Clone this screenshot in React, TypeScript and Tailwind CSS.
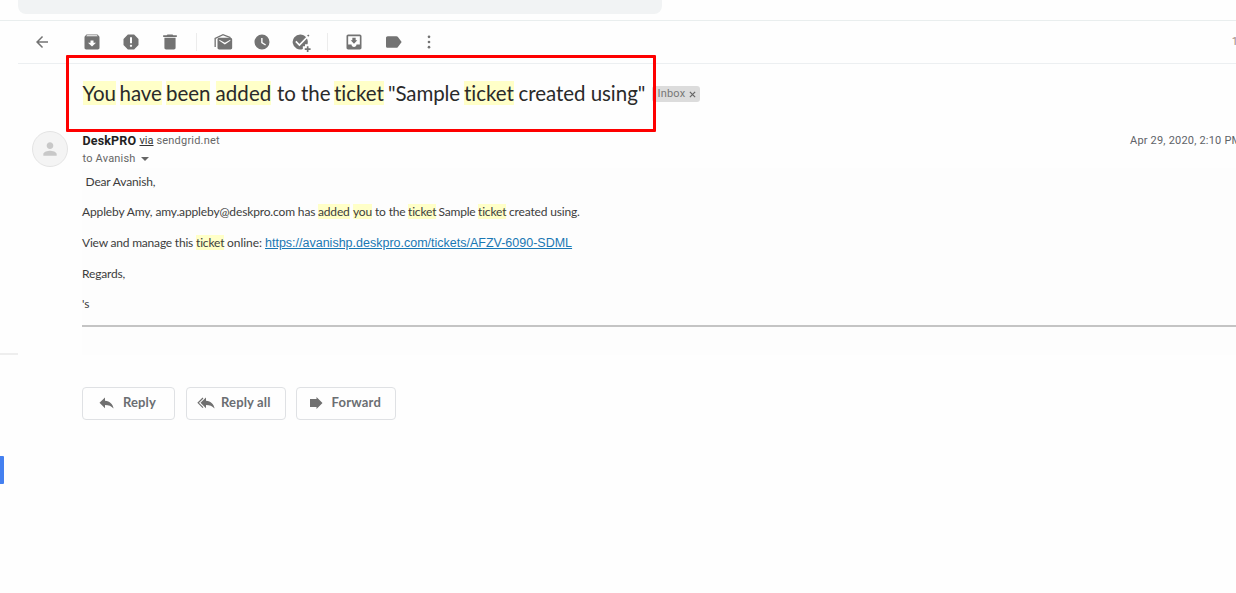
import React from "react";

function Icon({ d, className = "size-5", children }: { d?: string; className?: string; children?: React.ReactNode }) {
  return (
    <svg viewBox="0 0 24 24" fill="currentColor" className={"shrink-0 " + className}>
      {d && <path fillRule="evenodd" d={d} />}
      {children}
    </svg>
  );
}

const BACK = "M20 11H7.83l5.59-5.59L12 4l-8 8 8 8 1.41-1.41L7.83 13H20v-2z";
const ARCHIVE =
  "M20.54 5.23l-1.39-1.68C18.88 3.21 18.47 3 18 3H6c-.47 0-.88.21-1.16.55L3.46 5.23C3.17 5.57 3 6.02 3 6.5V19c0 1.1.9 2 2 2h14c1.1 0 2-.9 2-2V6.5c0-.48-.17-.93-.46-1.27zM12 17.4l-4.8-4.6H10.2v-2.6h3.6v2.6h3L12 17.4zM5.12 5l.81-1h12l.94 1H5.12z";
const REPORT =
  "M15.73 3H8.27L3 8.27v7.46L8.27 21h7.46L21 15.73V8.27L15.73 3zM12 18c-.8 0-1.4-.6-1.4-1.4s.6-1.4 1.4-1.4 1.4.6 1.4 1.4S12.8 18 12 18zm1.2-4.4h-2.4V6.4h2.4z";
const TRASH = "M5.3 19c0 1.1.9 2 2 2h9.4c1.1 0 2-.9 2-2V7H5.3v12zM19.5 4H16l-1-1H9L8 4H3.8v2h16.4V4z";
const UNREAD =
  "M23 9v10c0 1.1-.9 2-2 2H7.4c-1.1 0-2-.9-2-2V9c0-1.1.9-2 2-2H21c1.1 0 2 .9 2 2zM20.8 10.6V9.2L14.2 13 7.6 9.2v1.4l6.6 4.4z";
const CLOCK = "M12 3a9 9 0 1 0 0 18 9 9 0 0 0 0-18zm3.9 13.2L11 13.2V7.2h1.7v5.2l4.1 2.5z";
const MOVE =
  "M19 3H5c-1.1 0-2 .9-2 2v14c0 1.1.9 2 2 2h14c1.1 0 2-.9 2-2V5c0-1.1-.9-2-2-2zm0 12h-4c0 1.66-1.35 3-3 3s-3-1.34-3-3H5V5h14v10zM16 10h-2V7h-4v3H8l4 4z";
const LABEL = "M16.5 5.84C16.13 5.33 15.55 5 14.9 5L4.4 5.01c-1.1 0-2 .89-2 1.99v10c0 1.1.9 1.99 2 1.99L14.9 19c.65 0 1.23-.33 1.6-.84L21.2 12z";
const PERSON = "M12 12c2.21 0 4-1.79 4-4s-1.79-4-4-4-4 1.79-4 4 1.79 4 4 4zm0 2c-2.67 0-8 1.34-8 4v2h16v-2c0-2.66-5.33-4-8-4z";

function Hl({ children }: { children: React.ReactNode }) {
  return <mark className="bg-[#ffffc8] text-inherit">{children}</mark>;
}

function Separator({ className }: { className: string }) {
  return <div className={"h-[18px] w-px bg-[#ececec] " + className} />;
}

function Toolbar() {
  return (
    <div className="ml-[18px] flex h-[43px] items-center border-b border-[#eceff1] text-[#737373]">
      <Icon d={BACK} className="ml-[14.5px] size-[18px]" />
      <Icon d={ARCHIVE} className="ml-[31px] size-5" />
      <Icon d={REPORT} className="ml-[19px] size-5" />
      <Icon d={TRASH} className="ml-[19px] size-5" />
      <Separator className="ml-[16.5px]" />
      <Icon d={UNREAD} className="ml-4 size-5">
        <path d="M2.6 18V7.600L12 3.200l9 3.600" fill="none" stroke="currentColor" strokeWidth="1.600" />
      </Icon>
      <Icon d={CLOCK} className="ml-[19px] size-5" />
      <Icon className="ml-[19px] size-5">
        <path d="M11 3a9 9 0 1 0 3.200 17.400V17h2.600v-2.400h3A9 9 0 0 0 11 3z" />
        <path d="M5.800 11.300l4.300 4.300L21 4.500" fill="none" stroke="white" strokeWidth="2" />
        <path d="M20 3.600L21.400 5" fill="none" stroke="currentColor" strokeWidth="2" />
        <path d="M20 17v7M16.500 20.500h7" stroke="currentColor" strokeWidth="2" />
      </Icon>
      <Separator className="ml-[16px]" />
      <Icon d={MOVE} className="ml-4 size-5" />
      <Icon d={LABEL} className="ml-5 size-5" />
      <Icon className="ml-[15px] size-5">
        <circle cx="12" cy="5.800" r="1.600" />
        <circle cx="12" cy="12" r="1.600" />
        <circle cx="12" cy="18.200" r="1.600" />
      </Icon>
      <span className="mr-[-2px] ml-auto font-['Roboto'] text-[11px] text-[#a08880]">1</span>
    </div>
  );
}

function Subject() {
  return (
    <div className="ml-[66px] flex h-[77px] items-center">
      <div className="z-10 flex h-[77px] w-[590px] shrink-0 items-center rounded-[1px] border-3 border-[#fe0000] pb-[2px] pl-[13.5px]">
        <h1 className="flex font-['Lato'] text-[20.5px] leading-[24px] tracking-[-0.05px] whitespace-pre text-[#2a2a2a]">
          <span className="w-[37px]"><Hl>You</Hl></span>
          <span className="w-[46.5px]"><Hl>have</Hl></span>
          <span className="w-[49.5px]"><Hl>been</Hl></span>
          <span className="w-[61.5px] tracking-[0.1px]"><Hl>added</Hl></span>
          <span className="w-[57px]">to the</span>
          <span className="w-[54px]"><Hl>ticket</Hl></span>
          <span className="w-[76px] tracking-[-0.12px]">"Sample</span>
          <span className="w-[54.500px]"><Hl>ticket</Hl></span>
          <span>created using"</span>
        </h1>
      </div>
      <div className="-ml-1 flex h-4 w-[48px] items-center rounded-[3px] bg-[#dcdcdc] pt-px pl-[5.5px] font-['Roboto'] text-[11px] leading-[14px] tracking-[0.2px] text-[#777]">
        Inbox
        <svg viewBox="0 0 8 8" className="ml-1 size-[7px] text-[#666]">
          <path d="M1 1l6 6M7 1L1 7" stroke="currentColor" strokeWidth="1.4" />
        </svg>
      </div>
    </div>
  );
}

function ActionButton({ className, children }: { className: string; children: React.ReactNode }) {
  return (
    <button
      className={
        "flex h-[33px] items-center rounded-[4px] border border-[#dfe1e4] pb-px font-['Lato'] text-[13px] font-bold text-[#6b6e72] " +
        className
      }
    >
      {children}
    </button>
  );
}

export default function App() {
  return (
    <div className="flex h-[593px] w-[1236px] overflow-hidden bg-[#fefefe]">
      <div className="absolute top-[353px] left-0 h-[2px] w-[18px] bg-[#eeeeee]" />
      <div className="absolute top-[456px] left-0 h-7 w-1 rounded-r-[1px] bg-[#4480f0]" />
      <main className="flex w-full flex-col">
        <div className="ml-[18px] h-[14px] w-[644px] shrink-0 rounded-b-lg bg-[#f1f3f4]" />
        <div className="mt-[6px] h-px shrink-0 bg-[#e9eeee]" />
        <Toolbar />
        <div className="-mt-[9px]">
          <Subject />
        </div>
        <div className="-mt-px flex">
          <div className="ml-8 flex size-9 shrink-0 items-center justify-center rounded-full border border-[#e4e4e4] bg-[#f4f4f4] text-[#c8c8c8]">
            <Icon d={PERSON} className="size-5" />
          </div>
          <div className="ml-[14.5px] pt-px font-['Roboto']">
            <div className="flex h-[18px] items-center text-[11px] whitespace-pre text-[#666]">
              <b className="w-[57px] text-[12.5px] tracking-[0.15px] text-[#222]">DeskPRO</b>
              <span className="text-[#333] underline">via</span>
              <span className="tracking-[0.2px]"> sendgrid.net</span>
            </div>
            <div className="flex h-[18px] items-center text-[11px] tracking-[0.2px] text-[#666]">
              to Avanish
              <svg viewBox="0 0 8 4" className="ml-[5px] h-1 w-2" fill="#666">
                <path d="M0 0h8L4 4z" />
              </svg>
            </div>
          </div>
          <span className="mt-[3px] mr-[-3px] ml-auto w-[109px] font-['Roboto'] text-[11px] leading-[14px] tracking-[0.2px] whitespace-nowrap text-[#5f6368]">
            Apr 29, 2020, 2:10 PM
          </span>
        </div>
        <article className="ml-[82px] flex flex-col bg-[#fdfdfd] pt-[6px] font-['Lato'] text-[12px] leading-[15px] tracking-[-0.16px] whitespace-pre text-[#3c3c3c]">
          <p className="pl-[3.5px]">Dear Avanish,</p>
          <p className="mt-[15px] flex">
            <span className="w-[236px] tracking-[-0.14px]">Appleby Amy, amy.appleby@deskpro.com has</span>
            <span className="w-[35px]"><Hl>added</Hl></span>
            <span className="w-[22px]"><Hl>you</Hl></span>
            <span className="w-[33px]">to the</span>
            <span className="w-[30.5px]"><Hl>ticket</Hl></span>
            <span className="w-[39.500px] tracking-[-0.2px]">Sample</span>
            <span className="w-[31px]"><Hl>ticket</Hl></span>
            <span>created using.</span>
          </p>
          <p className="mt-[16px] flex">
            <span className="w-[114px] tracking-[-0.2px]">View and manage this</span>
            <span className="w-[31px]"><Hl>ticket</Hl></span>
            <span className="w-[38px] tracking-[-0.05px]">online:</span>
            <a className="pt-px font-['Liberation_Sans'] text-[12.5px] tracking-normal text-[#1a78b4] underline">
              https://avanishp.deskpro.com/tickets/AFZV-6090-SDML
            </a>
          </p>
          <p className="mt-[15px]">Regards,</p>
          <p className="mt-[15px]">'s</p>
          <div className="mt-[14px] h-[2px] bg-[#c4c4c4]" />
          <div className="h-[28px]" />
        </article>
        <div className="mt-[32px] ml-[82px] flex">
          <ActionButton className="w-[93px] pl-[16px]">
            <svg viewBox="0 0 15 12" className="h-3 w-[15px]" fill="#707070">
              <path d="M6 0.5v3.2c5 .5 7.8 3.3 8.6 7.8C12.3 9 9.7 8 6 8v3.2L0.5 5.8z" />
            </svg>
            <span className="ml-[9px] tracking-[0.1px]">Reply</span>
          </ActionButton>
          <ActionButton className="ml-[11px] w-[100px] pl-[10px]">
            <svg viewBox="0 0 18 12" className="h-3 w-[18px]" fill="#707070">
              <path d="M9 0.5v3.2c5 .5 7.8 3.3 8.6 7.8C15.3 9 12.7 8 9 8v3.2L3.5 5.8z" />
              <path d="M6 1L1.2 5.8 6 10.6" fill="none" stroke="#707070" strokeWidth="1.2" />
            </svg>
            <span className="ml-[6px] tracking-[0.15px]">Reply all</span>
          </ActionButton>
          <ActionButton className="ml-[10px] w-[100px] pl-[13px]">
            <svg viewBox="0 0 13 12" className="h-3 w-[13px]" fill="#707070">
              <path d="M0 2h6.5V0L12.5 6 6.5 12v-2H0z" />
            </svg>
            <span className="ml-[8.500px] tracking-[0.2px]">Forward</span>
          </ActionButton>
        </div>
      </main>
    </div>
  );
}
